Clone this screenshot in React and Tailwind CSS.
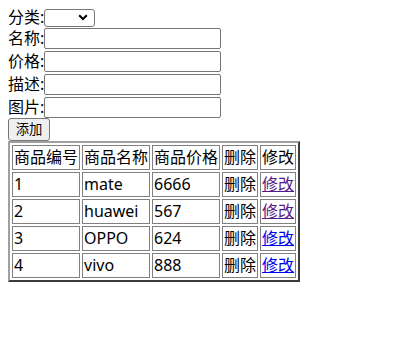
const goods = [
  { id: 1, name: 'mate', price: 6666, visited: true },
  { id: 2, name: 'huawei', price: 567, visited: true },
  { id: 3, name: 'OPPO', price: 624, visited: false },
  { id: 4, name: 'vivo', price: 888, visited: false },
];

const fields = ['名称', '价格', '描述', '图片'];

// cell widths: 68, 67, 67, 35, 36
function Cell({ w, children }) {
  return (
    <td className={`${w} h-[25px] border border-[#808080] p-[1px] leading-[21px] align-middle whitespace-nowrap`}>
      {children}
    </td>
  );
}

export default function App() {
  return (
    <div
      className="min-h-[342px] bg-white p-2 text-[16px] text-black"
      style={{ fontFamily: '"Noto Sans", "Noto Sans CJK SC", sans-serif' }}
    >
      {/* 表单 */}
      <div className="flex h-[19px] items-center">
        <span className="leading-[19px]">分类:</span>
        <div className="flex h-[18px] w-[51px] items-center justify-end rounded-[3px] border border-[#767676] bg-white pr-[6px]">
          <svg width="10" height="7" viewBox="0 0 10 7">
            <path d="M1.2 1.2 L5 5 L8.8 1.2" fill="none" stroke="#000" strokeWidth="2" />
          </svg>
        </div>
      </div>
      {fields.map((f, i) => (
        <div key={f} className={`flex ${i === 3 ? 'h-[22px]' : 'h-[23px]'} items-start`}>
          <span className="mt-[1px] leading-[21px]">{f}:</span>
          <div className="mt-[1px] h-[21px] w-[177px] rounded-[2px] border border-[#767676] bg-white" />
        </div>
      ))}
      <button className="flex h-[23px] w-[42px] items-center justify-center rounded-[3px] border border-[#767676] bg-[#efefef] text-[13.33px] leading-none">
        添加
      </button>

      {/* 商品表格 */}
      <table className="w-[289px] border-separate border-spacing-[2px] border-2 border-l-[#a0a0a0] border-t-[#a0a0a0] border-r-[#3c3c3c] border-b-[#3c3c3c] text-left">
        <tbody>
          <tr>
            <Cell w="w-[68px]">商品编号</Cell>
            <Cell w="w-[67px]">商品名称</Cell>
            <Cell w="w-[67px]">商品价格</Cell>
            <Cell w="w-[35px]">删除</Cell>
            <Cell w="w-[36px]">修改</Cell>
          </tr>
          {goods.map(g => (
            <tr key={g.id}>
              <Cell w="w-[68px]">{g.id}</Cell>
              <Cell w="w-[67px]">{g.name}</Cell>
              <Cell w="w-[67px]">{g.price}</Cell>
              <Cell w="w-[35px]">删除</Cell>
              <Cell w="w-[36px]">
                <a href="#" className={`underline ${g.visited ? 'text-[#551a8b]' : 'text-[#0000ee]'}`}>修改</a>
              </Cell>
            </tr>
          ))}
        </tbody>
      </table>
    </div>
  );
}
